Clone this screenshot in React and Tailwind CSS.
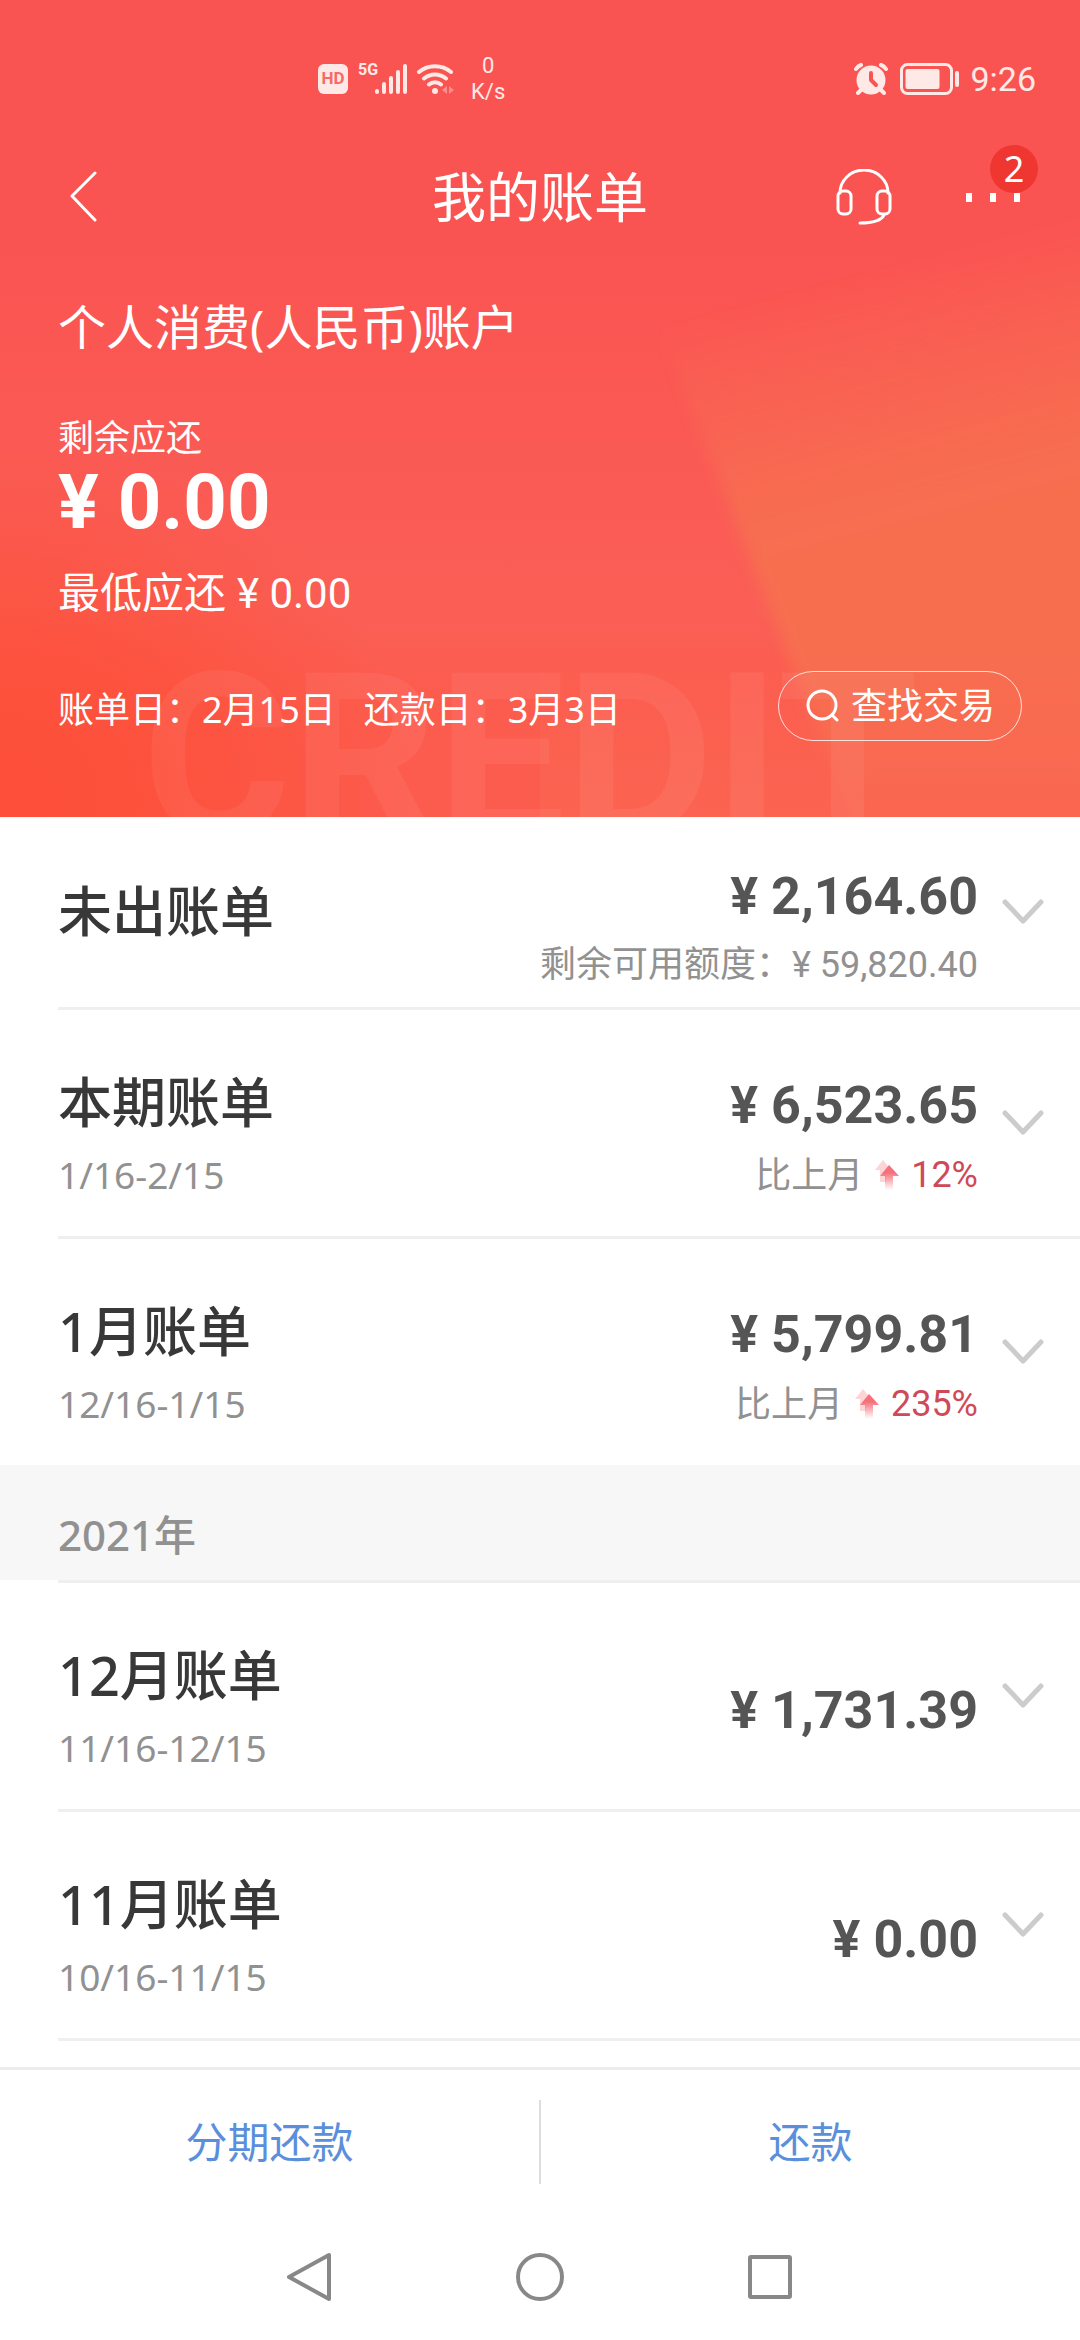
import React, { useState } from 'react';

const bills = [
  { title: '本期账单', range: '1/16-2/15', amount: '¥ 6,523.65', change: '12%' },
  { title: '1月账单', range: '12/16-1/15', amount: '¥ 5,799.81', change: '235%' },
];

const lastYearBills = [
  { title: '12月账单', range: '11/16-12/15', amount: '¥ 1,731.39' },
  { title: '11月账单', range: '10/16-11/15', amount: '¥ 0.00' },
];

const HeaderBackground = () => (
  <div className="absolute inset-0 overflow-hidden" aria-hidden="true">
    <svg className="block w-full h-full" viewBox="0 0 1080 816" preserveAspectRatio="none">
      <defs>
        <linearGradient id="base" x1="0" y1="0" x2="0" y2="1">
          <stop offset="0.3" stopColor="#fa5452" />
          <stop offset="0.75" stopColor="#fa5f56" />
          <stop offset="0.85" stopColor="#fc5c4e" />
          <stop offset="1" stopColor="#fc5c4e" />
        </linearGradient>
        <radialGradient id="corner" gradientUnits="userSpaceOnUse" cx="0" cy="800" r="420" gradientTransform="translate(0 120) scale(1 0.85)">
          <stop offset="0" stopColor="#fd4f39" />
          <stop offset="0.4" stopColor="#fd4f39" stopOpacity="0.8" />
          <stop offset="1" stopColor="#fd4f39" stopOpacity="0" />
        </radialGradient>
        <linearGradient id="beam" gradientUnits="userSpaceOnUse" x1="840" y1="280" x2="905" y2="530">
          <stop offset="0" stopColor="#f76e50" stopOpacity="0" />
          <stop offset="0.85" stopColor="#f76e50" stopOpacity="0.95" />
          <stop offset="1" stopColor="#f76e50" />
        </linearGradient>
        <linearGradient id="fade" x1="0" y1="0" x2="0" y2="1">
          <stop offset="0.8" stopColor="#fb6551" stopOpacity="0" />
          <stop offset="1" stopColor="#fb6551" stopOpacity="0.9" />
        </linearGradient>
        <filter id="soft">
          <feGaussianBlur stdDeviation="7" />
        </filter>
      </defs>
      <rect width="1080" height="816" fill="url(#base)" />
      <rect width="1080" height="816" fill="url(#corner)" />
      <path d="M620 200 L672 360 L790 660 L870 860 H1140 V200 Z" fill="url(#beam)" filter="url(#soft)" />
      <rect x="540" width="540" height="816" fill="url(#fade)" />
    </svg>
    <span className="absolute left-[142px] top-[643px] font-['Roboto',sans-serif] text-[228px] leading-[228px] font-bold text-white/6">
      CREDIT
    </span>
  </div>
);

const StatusBar = () => (
  <div className="flex items-center h-15 pl-[318px] pr-11 text-[#ffe9e6] font-['Roboto',sans-serif]">
    <span className="flex items-center justify-center size-[30px] rounded-md bg-[#ffe9e6] text-[#f96a66] text-[17px] font-bold">
      HD
    </span>
    <span className="ml-[10px] mb-[18px] text-[16px] leading-4 font-bold w-4">5G</span>
    <svg className="w-[34px] h-[30px]" viewBox="0 0 34 30" stroke="currentColor" strokeWidth="4" strokeLinecap="round">
      <path d="M3 27v1M10 20v8M17 14v14M24 8v20M31 2v26" />
    </svg>
    <svg className="ml-[9px] w-[38px] h-8" viewBox="0 0 38 32" fill="none" stroke="currentColor" strokeWidth="4" strokeLinecap="round">
      <path d="M2 9a25 25 0 0 1 32 0M7 15.500a17 17 0 0 1 22 0M12 21.500a9 9 0 0 1 12 0" />
      <circle cx="18" cy="28" r="3" fill="currentColor" stroke="none" />
      <path d="M30 23v8l-5-4zM32 23v8l5-4z" fill="currentColor" stroke="none" opacity="0.4" />
    </svg>
    <span className="ml-4 flex flex-col items-center text-[22px] leading-[26px]">
      <span>0</span>
      <span>K/s</span>
    </span>
    <svg className="ml-auto w-[34px] h-8" viewBox="0 0 34 32" fill="none" stroke="currentColor" strokeLinecap="round">
      <circle cx="17" cy="17" r="14.500" fill="currentColor" stroke="none" />
      <path d="M2 6q2-3 5-4M32 6q-2-3-5-4M7 27l-3 3M27 27l3 3" strokeWidth="4" />
      <path d="M17 10v7l5 5" stroke="#fa5452" strokeWidth="4" strokeLinejoin="round" />
    </svg>
    <svg className="ml-3 w-15 h-8" viewBox="0 0 60 32" fill="none" stroke="currentColor">
      <rect x="1.500" y="1.500" width="50" height="29" rx="6" strokeWidth="3" />
      <rect x="5.500" y="6" width="34" height="20" rx="2" fill="currentColor" stroke="none" />
      <path d="M57 10v12" strokeWidth="4" strokeLinecap="round" />
    </svg>
    <span className="ml-2.5 text-[34px] leading-10">9:26</span>
  </div>
);

const Chevron = () => (
  <svg className="w-[42px] h-[26px]" viewBox="0 0 42 26" fill="none" stroke="#cccccc" strokeWidth="5" strokeLinecap="round" strokeLinejoin="round">
    <path d="M3 3l18 19L39 3" />
  </svg>
);

const UpArrow = () => (
  <svg className="w-6 h-[30px]" viewBox="0 0 24 30">
    <defs>
      <linearGradient id="up" x1="0" y1="0" x2="0" y2="1">
        <stop offset="0.3" stopColor="#f5707a" />
        <stop offset="1" stopColor="#f5707a" stopOpacity="0" />
      </linearGradient>
    </defs>
    <path d="M8 0l8 10h-5v12H5V10H0z" fill="#fbb9bd" opacity="0.6" />
    <path d="M14 5l10 11h-6v14h-8V16H5z" fill="url(#up)" />
  </svg>
);

const Amount = ({ value }) => (
  <span className="font-['Roboto',sans-serif] text-[52px] leading-16 font-bold text-[#555555]">{value}</span>
);

const BillRow = ({ bill, last }) => {
  const [open, setOpen] = useState(false);

  return (
    <li className="pl-[58px]">
      <button
        type="button"
        aria-expanded={open}
        onClick={() => setOpen(!open)}
        className="flex w-full h-[226px] pr-9 text-left"
      >
        <span className="flex flex-col pt-[60px]">
          <span className="text-[54px] leading-16 font-medium text-[#383838]">{bill.title}</span>
          <span className="mt-4 text-[37px] leading-[50px] text-[#919191]">{bill.range}</span>
        </span>
        <span className={bill.change ? 'ml-auto flex flex-col items-end pt-16' : 'ml-auto flex flex-col items-end pt-24'}>
          <Amount value={bill.amount} />
          {bill.change && (
            <span className="mt-3 flex items-center gap-3 text-[36px] leading-[50px] text-[#919191]">
              比上月
              <UpArrow />
              <span className="font-['Roboto',sans-serif] text-[#cf4a58]">{bill.change}</span>
            </span>
          )}
        </span>
        <span className="ml-6 self-center">
          <Chevron />
        </span>
      </button>
      {!last && <div className="h-[3px] bg-[#efefef]" />}
    </li>
  );
};

const App = () => {
  return (
    <div className="min-h-screen flex flex-col bg-white font-['Noto_Sans','Noto_Sans_CJK_SC',sans-serif]">
      <header className="relative text-white bg-[#fa5452]">
        <HeaderBackground />
        <div className="relative pt-[49px] pb-[76px]">
          <StatusBar />

          <div className="mt-[52px] h-18 flex items-center pl-[70px] pr-[42px]">
            <div className="w-[200px]">
              <button type="button" aria-label="返回" className="block">
                <svg className="w-7 h-[52px]" viewBox="0 0 28 52" fill="none" stroke="currentColor" strokeWidth="3" strokeLinecap="round" strokeLinejoin="round">
                  <path d="M25 2L2 25l23 24" />
                </svg>
              </button>
            </div>
            <h1 className="flex-1 text-[54px] leading-18 font-normal text-center whitespace-nowrap">我的账单</h1>
            <div className="flex items-center justify-end w-[228px]">
              <button type="button" aria-label="客服">
                <svg className="w-14 h-14" viewBox="0 0 56 56" fill="none" stroke="currentColor" strokeWidth="3" strokeLinecap="round" strokeLinejoin="round">
                  <path d="M4 24a24 23 0 0 1 48 0" />
                  <rect x="2" y="22" width="13" height="23" rx="5" />
                  <rect x="41" y="22" width="13" height="23" rx="5" />
                  <path d="M48 46q-4 8-24 8" />
                </svg>
              </button>
              <button type="button" aria-label="更多" className="relative ml-[74px] mr-[18px] flex gap-[18px]">
                <span className="w-1.5 h-[9px] bg-white" />
                <span className="w-1.5 h-[9px] bg-white" />
                <span className="w-1.5 h-[9px] bg-white" />
                <span className="absolute -right-[18px] bottom-[9px] size-12 rounded-full bg-[#f03631] text-[36px] leading-12 text-center">
                  2
                </span>
              </button>
            </div>
          </div>

          <div className="px-[58px]">
            <h2 className="mt-[62px] text-[48px] leading-16">个人消费(人民币)账户</h2>
            <p className="mt-[57px] text-[36px] leading-11">剩余应还</p>
            <p className="font-['Roboto',sans-serif] text-[76px] leading-[84px] font-bold">¥ 0.00</p>
            <p className="mt-5 text-[42px] leading-14">
              最低应还 <span className="font-['Roboto',sans-serif]">¥ 0.00</span>
            </p>
            <div className="mt-[49px] flex items-center justify-between">
              <p className="flex gap-7 pt-2 text-[36px] leading-12">
                <span>账单日：2月15日</span>
                <span>还款日：3月3日</span>
              </p>
              <button type="button" className="flex items-center h-[70px] px-[26px] gap-3 rounded-full border border-white/80 text-[36px] leading-12">
                <svg className="w-[34px] h-[34px]" viewBox="0 0 34 34" fill="none" stroke="currentColor" strokeWidth="3" strokeLinecap="round">
                  <circle cx="17" cy="16" r="14" />
                  <path d="M27 26l5 5" />
                </svg>
                查找交易
              </button>
            </div>
          </div>
        </div>
      </header>

      <main>
        <button type="button" className="flex w-full h-[190px] pl-[58px] pr-9 text-left">
          <span className="pt-[62px] text-[54px] leading-16 font-medium text-[#383838]">未出账单</span>
          <span className="ml-auto pt-12 flex flex-col items-end">
            <Amount value="¥ 2,164.60" />
            <span className="mt-2.5 text-[36px] leading-[50px] text-[#919191]">
              剩余可用额度：<span className="font-['Roboto',sans-serif]">¥ 59,820.40</span>
            </span>
          </span>
          <span className="ml-6 self-center">
            <Chevron />
          </span>
        </button>
        <div className="ml-[58px] h-[3px] bg-[#efefef]" />

        <ul>
          {bills.map((bill, i) => (
            <BillRow key={bill.title} bill={bill} last={i === bills.length - 1} />
          ))}
        </ul>

        <h3 className="h-[115px] pl-[58px] pt-[42px] bg-[#f7f7f7] text-[42px] leading-14 font-medium text-[#919191]">2021年</h3>
        <div className="ml-[58px] h-[3px] bg-[#efefef]" />

        <ul>
          {lastYearBills.map((bill) => (
            <BillRow key={bill.title} bill={bill} />
          ))}
        </ul>
      </main>

      <footer className="mt-auto">
        <div className="flex items-center h-[146px] border-t-[3px] border-[#ececec] text-[42px] leading-14 text-[#5b8fdc]">
          <button type="button" className="flex-1">分期还款</button>
          <div className="w-0.5 h-[84px] bg-[#dddddd]" />
          <button type="button" className="flex-1">还款</button>
        </div>
        <nav className="flex items-center justify-center gap-[180px] h-[127px] text-[#888888]">
          <button type="button" aria-label="返回">
            <svg className="size-[50px]" viewBox="0 0 50 50" fill="none" stroke="currentColor" strokeWidth="4" strokeLinejoin="round">
              <path d="M44 3v44L4 25z" />
            </svg>
          </button>
          <button type="button" aria-label="主页">
            <svg className="size-[50px]" viewBox="0 0 50 50" fill="none" stroke="currentColor" strokeWidth="4">
              <circle cx="25" cy="25" r="22" />
            </svg>
          </button>
          <button type="button" aria-label="最近任务">
            <svg className="size-[50px]" viewBox="0 0 50 50" fill="none" stroke="currentColor" strokeWidth="4" strokeLinejoin="round">
              <rect x="5" y="5" width="40" height="40" rx="1" />
            </svg>
          </button>
        </nav>
      </footer>
    </div>
  );
};

export default App;
